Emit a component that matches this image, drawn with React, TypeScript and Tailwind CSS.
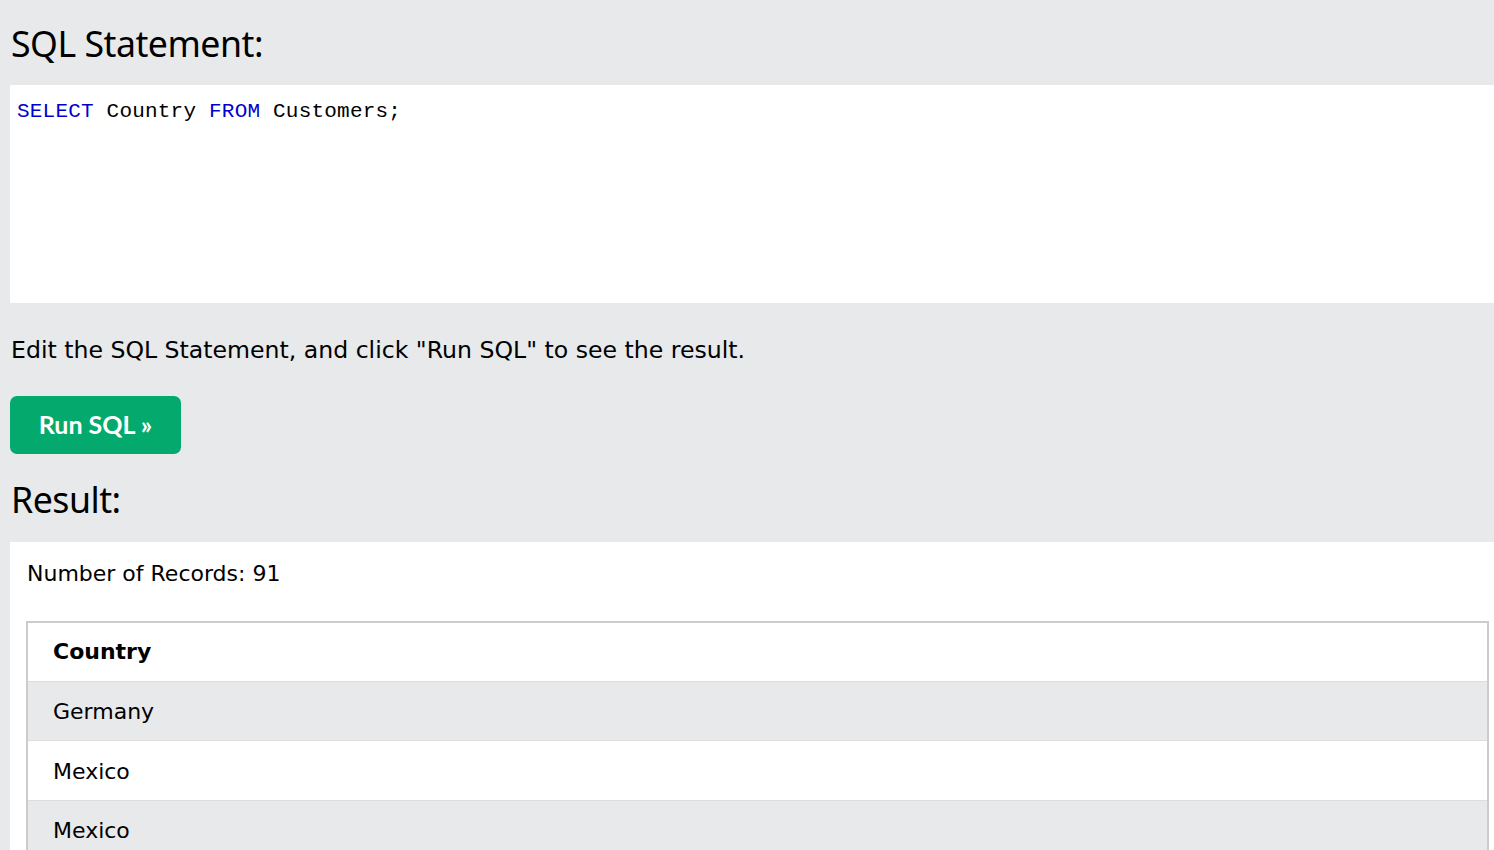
const rows = ["Germany", "Mexico", "Mexico"];

export default function App() {
  return (
    <div className="h-[850px] overflow-hidden bg-[#e7e9eb] pl-[10px] text-black">
      <h2 className="flex h-[85px] items-center pl-px pt-[2px] font-['Noto_Sans',sans-serif] text-[35.7px] font-normal tracking-[-0.5px]">
        SQL Statement:
      </h2>
      <div className="h-[218px] bg-white pl-[7px] pt-[12px] font-['Liberation_Mono',monospace] text-[21px] leading-[30px] tracking-[0.2px]">
        <span className="text-[#0000cd]">SELECT</span> Country{" "}
        <span className="text-[#0000cd]">FROM</span> Customers;
      </div>
      <p className="pl-px pt-[32px] font-['DejaVu_Sans',sans-serif] text-[23.6px] leading-[30px]">
        Edit the SQL Statement, and click "Run SQL" to see the result.
      </p>
      <button
        className="mt-[31px] flex h-[58px] w-[171px] items-center justify-center rounded-[7px] bg-[#04aa6d] font-['Lato',sans-serif] text-[25px] font-bold text-white"
        type="button"
      >
        Run SQL »
      </button>
      <h2 className="flex h-[88px] items-center pl-px pt-[4px] font-['Noto_Sans',sans-serif] text-[35.7px] font-normal tracking-[-0.5px]">
        Result:
      </h2>
      <div className="bg-white pl-[16px] pr-[5px] pt-[17px] pb-10 font-['DejaVu_Sans',sans-serif] text-[22px]">
        <div className="h-[62px] pl-px leading-[30px]">Number of Records: 91</div>
        <table className="w-full border-collapse border-2 border-[#cccccc]">
          <thead>
            <tr className="h-[59px] border-b border-[#dddddd] bg-white">
              <th className="pl-[25px] text-left font-bold">Country</th>
            </tr>
          </thead>
          <tbody>
            {rows.map((r, i) => (
              <tr
                key={i}
                className={`h-[59.5px] border-b border-[#dddddd] ${i % 2 === 0 ? "bg-[#e7e9eb]" : "bg-white"}`}
              >
                <td className="pl-[25px] pt-[2px]">{r}</td>
              </tr>
            ))}
          </tbody>
        </table>
      </div>
    </div>
  );
}
